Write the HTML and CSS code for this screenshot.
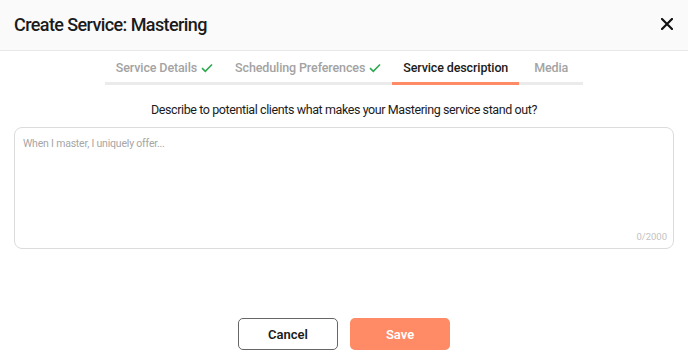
FILE: index.html
```html
<!DOCTYPE html>
<html>
<head>
<meta charset="utf-8">
<link rel="stylesheet" href="styles.css">
</head>
<body>
<div class="modal">
  <header class="head">
    <h1 class="title">Create Service: Mastering</h1>
    <button class="close" aria-label="Close">
      <svg width="12" height="12" viewBox="0 0 12 12"><path d="M1 1L11 11M11 1L1 11" stroke="#111" stroke-width="2.2" stroke-linecap="square"/></svg>
    </button>
  </header>
  <nav class="tabs">
    <div class="tab done">Service Details <svg class="check" width="12" height="10" viewBox="0 0 12 10"><path d="M1 5.2L4.3 8.3L11 1.5" fill="none" stroke="#2ea84f" stroke-width="1.6"/></svg></div>
    <div class="tab done">Scheduling Preferences <svg class="check" width="12" height="10" viewBox="0 0 12 10"><path d="M1 5.2L4.3 8.3L11 1.5" fill="none" stroke="#2ea84f" stroke-width="1.6"/></svg></div>
    <div class="tab active">Service description</div>
    <div class="tab last">Media</div>
  </nav>
  <p class="prompt">Describe to potential clients what makes your Mastering service stand out?</p>
  <div class="field">
    <textarea class="area" placeholder="When I master, I uniquely offer..."></textarea>
    <span class="count">0/2000</span>
  </div>
  <div class="actions">
    <button class="btn cancel">Cancel</button>
    <button class="btn save">Save</button>
  </div>
</div>
</body>
</html>
```
FILE: styles.css
```css
* { box-sizing: border-box; }
html, body { margin: 0; padding: 0; background: #fff; }
body { font-family: Roboto, "Noto Sans", sans-serif; color: #1a1a1a; width: 688px; height: 363px; overflow: hidden; }
.modal { display: flex; flex-direction: column; height: 363px; }
.head {
  height: 51px;
  background: #fafafa;
  border-bottom: 1px solid #e8e8e8;
  display: flex;
  align-items: center;
  justify-content: space-between;
  padding: 0 15px 2px 14px;
}
.title { margin: 0; font-size: 18px; font-weight: 500; letter-spacing: -0.6px; color: #1b1b1b; }
.close { border: 0; background: none; padding: 0; display: flex; cursor: pointer; }
.tabs {
  align-self: center;
  display: flex;
  margin-top: 9px;
  border-bottom: 3px solid #ebebeb;
}
.tab {
  font-size: 12.5px;
  font-weight: 500;
  color: #a3a3a3;
  padding: 0 11px 7px;
  margin-bottom: -3px;
  border-bottom: 3px solid transparent;
  display: flex;
  align-items: center;
  gap: 4px;
  white-space: nowrap;
  letter-spacing: -0.12px;
}
.tab.active { color: #1b1b1b; border-bottom-color: #ff8a66; }
.tab.last { padding-left: 15px; padding-right: 15px; }
.check { margin-top: 1px; }
.prompt { margin: 17px 0 0; text-align: center; font-size: 12.5px; letter-spacing: -0.4px; color: #1b1b1b; }
.field { position: relative; margin: 10px 14px 0; height: 122px; }
.area {
  width: 100%;
  height: 100%;
  resize: none;
  border: 1px solid #dcdcdc;
  border-radius: 8px;
  padding: 9px 8px;
  font-family: Roboto, "Noto Sans", sans-serif;
  font-size: 10.5px;
  letter-spacing: -0.2px;
  outline: none;
}
.area::placeholder { color: #a6a6a6; }
.count { position: absolute; right: 7px; bottom: 7px; font-size: 9.5px; color: #c2c2c2; }
.actions { display: flex; justify-content: center; gap: 12px; margin-top: 69px; }
.btn {
  width: 100px;
  height: 32px;
  border-radius: 5px;
  font-family: Roboto, "Noto Sans", sans-serif;
  font-size: 13px;
  font-weight: 600;
  cursor: pointer;
}
.cancel { background: #fff; border: 1px solid #666; color: #1b1b1b; }
.save { background: #ff8a66; border: 0; color: #fff; }
```
